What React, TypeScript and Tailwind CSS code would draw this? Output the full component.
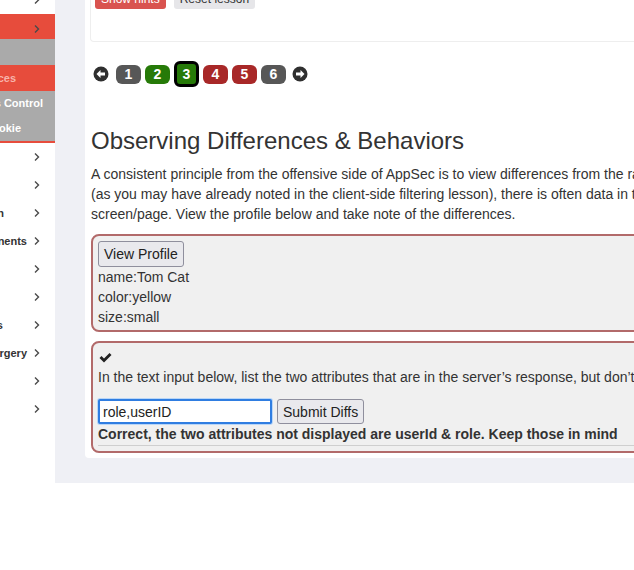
import { ReactNode } from "react";

type NavRow = {
  label: string;
  // where the visible end of the label sits
  mr: string;
};

const mainRows: NavRow[] = [
  { label: "(A2) Cryptographic Failures", mr: "mr-[60px]" },
  { label: "(A3) Injection", mr: "mr-[60px]" },
  { label: "(A5) Security Misconfiguration", mr: "mr-[30px]" },
  { label: "(A6) Vuln & Outdated Components", mr: "mr-[7px]" },
  { label: "(A7) Identity & Auth Failure", mr: "mr-[60px]" },
  { label: "(A8) Software & Data Integrity", mr: "mr-[60px]" },
  { label: "(A9) Security Logging Failures", mr: "mr-[31px]" },
  { label: "(A10) Server-side Request Forgery", mr: "mr-[7px]" },
  { label: "Client side", mr: "mr-[60px]" },
  { label: "Challenges", mr: "mr-[60px]" },
];

const subRows = [
  { label: "Hijack a session", mr: "mr-[60px]", cls: "h-[26px] text-white" },
  { label: "Insecure Direct Object References", mr: "mr-[39px]", cls: "h-[26px] bg-[#e74c3c] text-[#f7b3aa]" },
  { label: "Missing Function Level Access Control", mr: "mr-[12px]", cls: "h-[25px] text-white" },
  { label: "Spoofing an Authentication Cookie", mr: "mr-[34px]", cls: "h-[25px] text-white" },
];

const pages = [
  { n: 1, cls: "h-[19px] bg-[#575757]" },
  { n: 2, cls: "h-[19px] bg-[#267a08]" },
  { n: 3, cls: "h-[26px] border-[3px] border-black bg-[#267a08]" },
  { n: 4, cls: "h-[19px] bg-[#a82828]" },
  { n: 5, cls: "h-[19px] bg-[#a82828]" },
  { n: 6, cls: "h-[19px] bg-[#575757]" },
];

function Chevron() {
  return (
    <svg width="6" height="10" viewBox="0 0 6 10" className="shrink-0">
      <polyline points="1,1.5 4.5,5 1,8.5" fill="none" stroke="#4a4a4a" strokeWidth="1.4" />
    </svg>
  );
}

function CircleArrow({ dir }: { dir: "left" | "right" }) {
  return (
    <svg width="16" height="16" viewBox="0 0 16 16">
      <circle cx="8" cy="8" r="7.5" fill="#2f2f2f" />
      <g transform={dir === "right" ? "rotate(180 8 8)" : undefined}>
        <path d="M3.5 8 L7.5 4 L7.5 6.6 L12 6.6 L12 9.4 L7.5 9.4 L7.5 12 Z" fill="#fff" />
      </g>
    </svg>
  );
}

function Clip({ children, mr }: { children: ReactNode; mr: string }) {
  return (
    <div className="flex min-w-0 flex-1 justify-end overflow-hidden whitespace-nowrap">
      <span className={`shrink-0 ${mr}`}>{children}</span>
    </div>
  );
}

function Sidebar() {
  return (
    <aside className="flex w-[55px] shrink-0 flex-col bg-white text-[11px] font-bold text-[#333]">
      <div className="flex h-[14px] items-start pr-[15px]">
        <Clip mr="mr-[60px]">Introduction</Clip>
        <div className="-mt-[5px]">
          <Chevron />
        </div>
      </div>
      <div className="flex h-[25px] items-center bg-[#e74c3c] pt-[5px] pr-[15px] text-white">
        <Clip mr="mr-[60px]">(A1) Broken Access Control</Clip>
        <Chevron />
      </div>
      <div className="flex flex-col border-b-2 border-[#e74c3c] bg-[#aaaaaa]">
        {subRows.map((r) => (
          <div key={r.label} className={`flex items-center ${r.cls}`}>
            <Clip mr={r.mr}>{r.label}</Clip>
          </div>
        ))}
      </div>
      {mainRows.map((r) => (
        <div key={r.label} className="flex h-[28px] items-center pr-[15px]">
          <Clip mr={r.mr}>{r.label}</Clip>
          <Chevron />
        </div>
      ))}
    </aside>
  );
}

function Pager() {
  return (
    <div className="ml-[2px] mt-[19px] flex h-[26px] items-center">
      <CircleArrow dir="left" />
      <div className="ml-[7px] flex items-center gap-[4px]">
        {pages.map((p) => (
          <div
            key={p.n}
            className={`flex w-[25px] items-center justify-center rounded-[6px] text-[14px] font-bold text-white ${p.cls}`}
          >
            {p.n}
          </div>
        ))}
      </div>
      <div className="ml-[6px]">
        <CircleArrow dir="right" />
      </div>
    </div>
  );
}

function LessonCard() {
  return (
    <div className="h-[458px] w-[900px] overflow-hidden rounded-bl-[4px] bg-white pl-[5px]">
      <div className="-mt-[11px] flex gap-[8px] rounded-b-[4px] border border-t-0 border-[#eeeeee] px-[4px] pb-[32px]">
        <button className="h-[20px] rounded-[3px] bg-[#d9534f] px-[6px] text-[12px] text-white">
          Show hints
        </button>
        <button className="h-[20px] rounded-[3px] bg-[#e6e6e9] px-[6px] text-[12px] text-[#333]">
          Reset lesson
        </button>
      </div>

      <div className="pl-[1px] text-[14px] leading-5 text-[#333]">
        <Pager />

        <h2 className="mt-[39px] text-[24px] leading-[30px] text-[#333]">
          Observing Differences &amp; Behaviors
        </h2>

        <p className="mt-[8px] whitespace-nowrap">
          A consistent principle from the offensive side of AppSec is to view differences from the raw response and what is visible. In other words
          <br />
          (as you may have already noted in the client-side filtering lesson), there is often data in the raw response that doesn’t show up on the
          <br />
          screen/page. View the profile below and take note of the differences.
        </p>

        <div className="mt-[10px] rounded-[8px] border-2 border-[#b26a6a] bg-[#f0f0f0] px-[5px] pt-[5px] pb-[3px]">
          <button className="h-[26px] rounded-[3px] border border-[#8f8f9d] bg-[#e9e9ed] px-[5px] text-[14px] text-[#222]">
            View Profile
          </button>
          <div>name:Tom Cat</div>
          <div>color:yellow</div>
          <div>size:small</div>
        </div>

        <div className="mt-[9px] rounded-[8px] border-2 border-[#b26a6a] bg-[#f0f0f0] px-[5px] pt-[4px] pb-[5px]">
          <div className="flex h-[20px] items-center pl-[1px]">
            <svg width="13" height="11" viewBox="0 0 13 11">
              <path d="M0.5 6 L2.5 4 L5 6.5 L10.5 1 L12.5 3 L5 10.5 Z" fill="#222" />
            </svg>
          </div>
          <div className="whitespace-nowrap">
            In the text input below, list the two attributes that are in the server’s response, but don’t show in the profile.
          </div>
          <div className="mt-[12px] flex items-center gap-[5px]">
            <input
              readOnly
              value="role,userID"
              className="h-[25px] w-[174px] rounded-[2px] border-2 border-[#2f7de1] bg-white px-[3px] text-[14px] text-[#222] shadow-[0_0_0_1px_#b9d6f7] outline-none"
            />
            <button className="h-[25px] rounded-[3px] border border-[#8f8f9d] bg-[#e9e9ed] px-[5px] text-[14px] text-[#222]">
              Submit Diffs
            </button>
          </div>
          <div className="whitespace-nowrap font-bold">
            Correct, the two attributes not displayed are userId &amp; role. Keep those in mind
          </div>
          <hr className="mt-[1px] border-t border-[#cfcfcf]" />
        </div>
      </div>
    </div>
  );
}

export default function App() {
  return (
    <div className="flex h-[570px] w-[634px] items-start overflow-hidden bg-white font-['Liberation_Sans',Arial,sans-serif]">
      <Sidebar />
      <main className="h-[483px] min-w-0 flex-1 overflow-hidden bg-[#eff0f5] pl-[30px]">
        <LessonCard />
      </main>
    </div>
  );
}
